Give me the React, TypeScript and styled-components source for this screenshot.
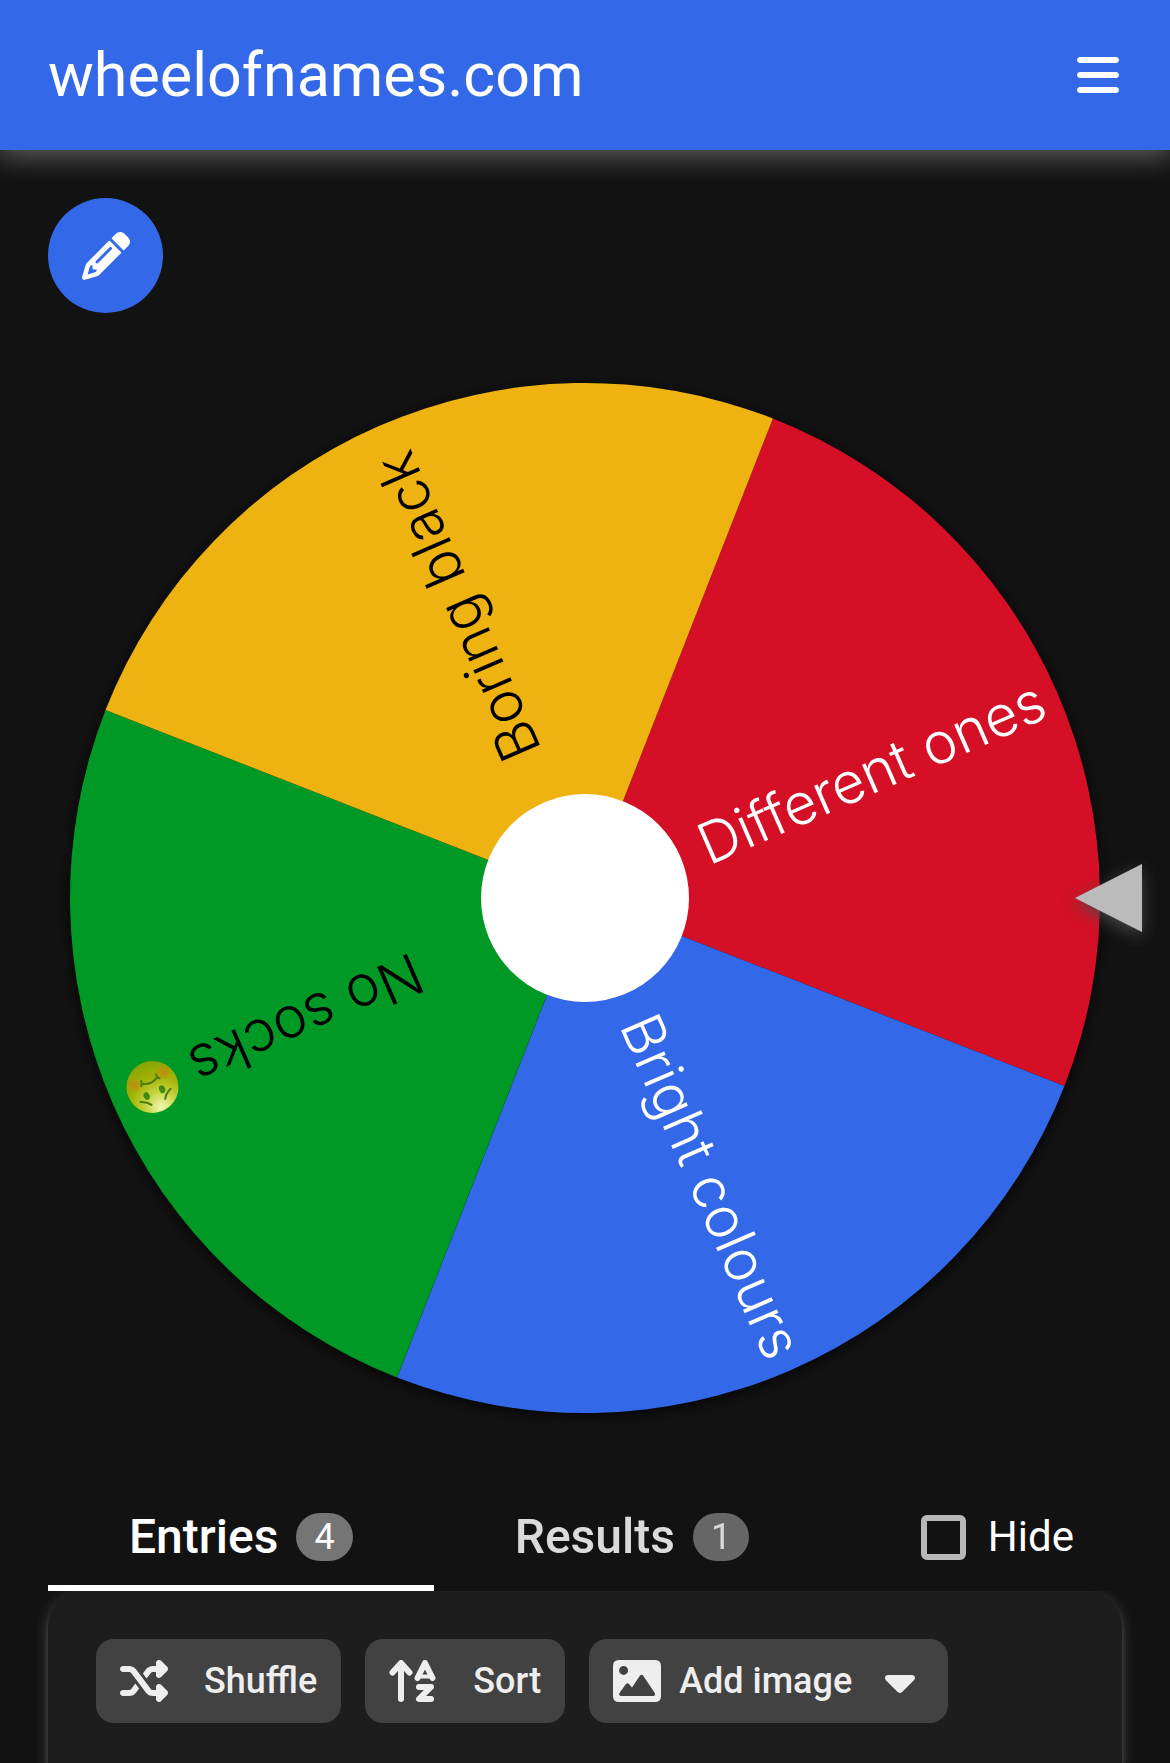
import React, { useState } from "react";
import styled, { createGlobalStyle } from "styled-components";
import { FaBars, FaCaretDown, FaPencil, FaShuffle } from "react-icons/fa6";

const GlobalStyle = createGlobalStyle`
  *, *::before, *::after { box-sizing: border-box; }
  body {
    margin: 0;
    background: #121212;
    color: #fff;
    font-family: Roboto, "Liberation Sans", sans-serif;
  }
  button, input { font: inherit; color: inherit; }
  svg { display: block; }
`;

const Page = styled.div`
  display: flex;
  flex-direction: column;
  min-height: 100vh;
`;

const Header = styled.header`
  display: flex;
  align-items: center;
  justify-content: space-between;
  height: 150px;
  padding: 0 48px;
  background: #3369e8;
  box-shadow: 0 0 30px 6px rgba(255, 255, 255, 0.2), 0 0 30px rgba(255, 255, 255, 0.24);
  clip-path: inset(0 0 -30px 0);
`;

const SiteTitle = styled.a`
  color: #fff;
  font-size: 61px;
  line-height: 72px;
  text-decoration: none;
`;

const IconButton = styled.button`
  padding: 0;
  border: 0;
  background: none;
  font-size: 48px;
  cursor: pointer;
`;

const Main = styled.main`
  flex: 1;
  display: flex;
  flex-direction: column;
  padding-top: 48px;
`;

const EditButton = styled.button`
  display: flex;
  align-items: center;
  justify-content: center;
  width: 115px;
  height: 115px;
  margin-left: 48px;
  padding: 0;
  border: 0;
  border-radius: 50%;
  background: #3369e8;
  font-size: 48px;
  cursor: pointer;
`;

const WheelCanvas = styled.svg`
  width: 100%;
  height: auto;
`;

const SliceLabel = styled.text`
  font-family: Inter, "Liberation Sans", sans-serif;
  font-size: 57px;
  font-weight: 300;
  text-anchor: end;
  white-space: pre;
`;

const Panel = styled.section`
  flex: 1;
  display: flex;
  flex-direction: column;
  padding: 0 48px;
`;

const TabBar = styled.div`
  display: flex;
  height: 108px;
`;

const TabList = styled.div`
  display: flex;
`;

const Tab = styled.button<{ $active: boolean }>`
  display: flex;
  align-items: center;
  gap: 18px;
  padding: 6px 81px 0;
  border: 0;
  border-bottom: 6px solid ${(p) => (p.$active ? "#fff" : "transparent")};
  background: none;
  font-size: 48px;
  font-weight: 500;
  line-height: 60px;
  cursor: pointer;
  & > * { opacity: ${(p) => (p.$active ? 1 : 0.85)}; }
`;

const Badge = styled.span`
  min-width: 56px;
  padding: 0 18px;
  border-radius: 24px;
  background: #757575;
  font-size: 36px;
  font-weight: 400;
  line-height: 48px;
`;

const HideOption = styled.label`
  flex: 1;
  display: flex;
  align-items: center;
  justify-content: flex-end;
  gap: 22px;
  padding-right: 48px;
  font-size: 42px;
  line-height: 48px;
  cursor: pointer;
`;

const CheckBox = styled.input`
  appearance: none;
  width: 45px;
  height: 45px;
  margin: 0;
  border: 6px solid #b8b8b8;
  border-radius: 6px;
  cursor: pointer;
  &:checked { background: #3369e8; }
`;

const Card = styled.div`
  flex: 1;
  padding: 48px;
  border-radius: 36px 36px 0 0;
  background: #1d1d1d;
  box-shadow: 0 3px 15px rgba(255, 255, 255, 0.2), 0 6px 6px rgba(255, 255, 255, 0.14),
    0 9px 3px -6px rgba(255, 255, 255, 0.12);
  clip-path: inset(0 -20px);
`;

const Toolbar = styled.div`
  display: flex;
  flex-wrap: wrap;
  gap: 24px;
`;

const ToolButton = styled.button<{ $gap: number }>`
  display: flex;
  align-items: center;
  gap: ${(p) => p.$gap}px;
  height: 84px;
  padding: 0 24px;
  border: 0;
  border-radius: 18px;
  background: #424242;
  color: #eee;
  font-size: 36px;
  font-weight: 500;
  line-height: 42px;
  cursor: pointer;
  & > svg { font-size: 48px; }
`;

const MenuCaret = styled(FaCaretDown)`
  margin-left: 6px;
`;

const slices = [
  { label: "Different ones", fill: "#d50f25", ink: "#fff" },
  { label: "Bright colours", fill: "#3369e8", ink: "#fff" },
  { label: "No socks", fill: "#009925", ink: "#000", emoji: true },
  { label: "Boring black ", fill: "#eeb211", ink: "#000" },
];

const RADIUS = 515;
const HUB_RADIUS = 104;
const FIRST_ANGLE = -23.6;
const LABEL_END = 499;

function SadFace() {
  return (
    <g transform={`translate(${LABEL_END - 27} 0)`}>
      <circle r="26" fill="url(#face)" />
      <circle cx="16" cy="9" r="8" fill="url(#blush)" />
      <circle cx="-16" cy="9" r="8" fill="url(#blush)" />
      <g fill="none" stroke="#4b7a10" strokeWidth="2" strokeLinecap="round">
        <path d="M-8 7 Q0 2 8 7 M-10 5 Q-8 7 -8 10 M10 5 Q8 7 8 10" />
        <path d="M-16 -9 Q-10 -11 -7 -16 M17 -9 Q11 -11 8 -16" />
      </g>
      <ellipse cx="-8" cy="-6" rx="3" ry="4" fill="#3f8a10" />
      <ellipse cx="9" cy="-6" rx="3" ry="4" fill="#3f8a10" />
    </g>
  );
}

function Wheel() {
  return (
    <WheelCanvas viewBox="0 0 1170 1170" role="img" aria-label="Wheel with four entries">
      <defs>
        <filter id="wheelShadow" x="-10%" y="-10%" width="120%" height="120%">
          <feDropShadow dx="0" dy="3" stdDeviation="7" floodColor="#000" floodOpacity="0.8" />
        </filter>
        <filter id="pointerShadow" x="-50%" y="-50%" width="200%" height="200%">
          <feDropShadow dx="0" dy="5" stdDeviation="8" floodColor="#4b4b4b" floodOpacity="0.9" />
        </filter>
        <radialGradient id="face" cx="0.5" cy="0.08" r="0.9">
          <stop offset="0" stopColor="#f1f7b4" />
          <stop offset="0.35" stopColor="#c3d23c" />
          <stop offset="0.65" stopColor="#a3b406" />
          <stop offset="1" stopColor="#8aa406" />
        </radialGradient>
        <radialGradient id="blush">
          <stop offset="0" stopColor="#c98510" stopOpacity="0.9" />
          <stop offset="1" stopColor="#c98510" stopOpacity="0" />
        </radialGradient>
      </defs>
      <g transform="translate(585 585)">
        <circle r={RADIUS} fill="#000" filter="url(#wheelShadow)" />
        {slices.map((slice, i) => (
          <g key={slice.label} transform={`rotate(${FIRST_ANGLE + i * 90})`}>
            <path
              d={`M0 0 L${RADIUS * Math.SQRT1_2} ${-RADIUS * Math.SQRT1_2} A${RADIUS} ${RADIUS} 0 0 1 ${
                RADIUS * Math.SQRT1_2
              } ${RADIUS * Math.SQRT1_2} Z`}
              fill={slice.fill}
            />
            <SliceLabel x={slice.emoji ? LABEL_END - 71 : LABEL_END} y="20" fill={slice.ink}>
              {slice.label}
            </SliceLabel>
            {slice.emoji && <SadFace />}
          </g>
        ))}
        <circle r={HUB_RADIUS} fill="#fff" />
      </g>
      <path
        d="M1075 585 L1142 551 V619 Z"
        fill="#bbb"
        filter="url(#pointerShadow)"
      />
    </WheelCanvas>
  );
}

function SortIcon() {
  return (
    <svg
      width="48"
      height="42"
      viewBox="0 0 48 42"
      fill="none"
      stroke="currentColor"
      strokeWidth="6"
      strokeLinecap="round"
      strokeLinejoin="round"
      aria-hidden="true"
    >
      <path d="M12 39V4M3.5 12.5L12 3L20.5 12.5" />
      <path d="M28.5 18L36 3L43.5 18" />
      <path d="M31 16.5H41" strokeWidth="4" />
      <path d="M30 27H42L30 39H42" />
    </svg>
  );
}

function ImageIcon() {
  return (
    <svg width="48" height="42" viewBox="0 0 48 42" aria-hidden="true">
      <path
        fill="currentColor"
        fillRule="evenodd"
        d="M6 0H42Q48 0 48 6V36Q48 42 42 42H6Q0 42 0 36V6Q0 0 6 0Z
           M10.6 5.9A4.5 4.5 0 1 0 10.6 14.9A4.5 4.5 0 1 0 10.6 5.9Z
           M8 36H40.5Q43 35.5 41.5 32.5L30 15.5Q28.5 14 27 15.5L19 27.5L16 24Q14.5 22.5 13 24L6.8 32.5Q5 35.5 8 36Z"
      />
    </svg>
  );
}

export default function App() {
  const [tab, setTab] = useState("entries");
  const [hidden, setHidden] = useState(false);

  return (
    <>
      <GlobalStyle />
      <Page>
        <Header>
          <SiteTitle href="#">wheelofnames.com</SiteTitle>
          <IconButton type="button" aria-label="Menu">
            <FaBars />
          </IconButton>
        </Header>
        <Main>
          <EditButton type="button" aria-label="Edit title">
            <FaPencil />
          </EditButton>
          <Wheel />
          <Panel>
            <TabBar>
              <TabList role="tablist">
                <Tab
                  type="button"
                  role="tab"
                  aria-selected={tab === "entries"}
                  $active={tab === "entries"}
                  onClick={() => setTab("entries")}
                >
                  <span>Entries</span>
                  <Badge>4</Badge>
                </Tab>
                <Tab
                  type="button"
                  role="tab"
                  aria-selected={tab === "results"}
                  $active={tab === "results"}
                  onClick={() => setTab("results")}
                >
                  <span>Results</span>
                  <Badge>1</Badge>
                </Tab>
              </TabList>
              <HideOption>
                <CheckBox type="checkbox" checked={hidden} onChange={(e) => setHidden(e.target.checked)} />
                Hide
              </HideOption>
            </TabBar>
            {!hidden && (
              <Card>
                <Toolbar>
                  <ToolButton type="button" $gap={36}>
                    <FaShuffle />
                    Shuffle
                  </ToolButton>
                  <ToolButton type="button" $gap={36}>
                    <SortIcon />
                    Sort
                  </ToolButton>
                  <ToolButton type="button" $gap={18} aria-haspopup="menu">
                    <ImageIcon />
                    Add image
                    <MenuCaret />
                  </ToolButton>
                </Toolbar>
              </Card>
            )}
          </Panel>
        </Main>
      </Page>
    </>
  );
}
